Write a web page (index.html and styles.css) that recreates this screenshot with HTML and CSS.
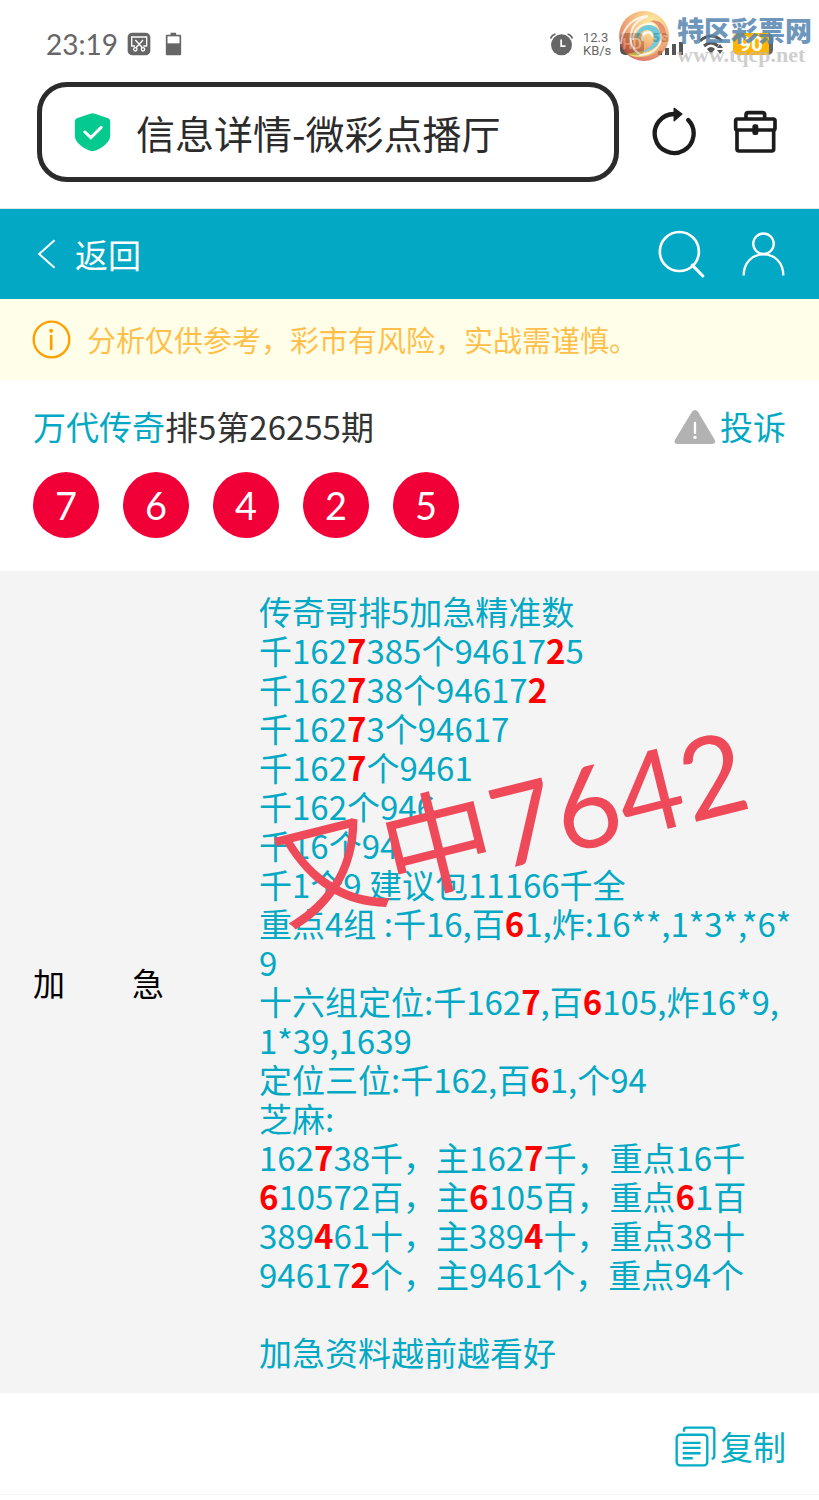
FILE: index.html
```html
<!DOCTYPE html>
<html lang="zh-CN">
<head>
<meta charset="utf-8">
<meta name="viewport" content="width=device-width, initial-scale=1">
<title>信息详情-微彩点播厅</title>
<link rel="stylesheet" href="styles.css">
</head>
<body>
<div class="status">
  <span class="clock">23:19</span>
  <svg class="i-shot" viewBox="380 38 72 72" aria-hidden="true"><rect x="382" y="40" width="68" height="68" rx="14" fill="#666"/><path d="M404 80h-10V53h45v27h-10" fill="none" stroke="#fff" stroke-width="4"/><path d="M405 62l22 24M428 62l-22 24" stroke="#fff" stroke-width="4"/><circle cx="405" cy="90" r="5" fill="none" stroke="#fff" stroke-width="4"/><circle cx="428" cy="90" r="5" fill="none" stroke="#fff" stroke-width="4"/></svg>
  <svg class="i-cell" viewBox="495 38 50 72" aria-hidden="true"><path d="M511 40h17v6h12q3 0 3 3v56q0 3-3 3h-40q-3 0-3-3V49q0-3 3-3h11z" fill="#666"/><path d="M502 51h36v21h-36z" fill="#fff"/></svg>
  <div class="status-right">
    <svg class="i-alarm" viewBox="33 102 68 68" aria-hidden="true"><circle cx="67" cy="137" r="31" fill="#666"/><path d="M35 118q3-10 14-13M99 118q-3-10-14-13" stroke="#666" stroke-width="5" fill="none"/><path d="M66 121v20h13" stroke="#fff" stroke-width="5" fill="none"/></svg>
    <span class="speed">12.3<br>KB/s</span>
    <span class="hd">HD</span>
    <span class="signal"><small>5G</small><svg viewBox="0 0 32 22" aria-hidden="true"><path d="M6 18h4v4H6zM13 15h4v7h-4zM20 11h4v11h-4zM27 9h4v13h-4z" fill="#555"/></svg></span>
    <svg class="i-wifi" viewBox="0 0 26 22" aria-hidden="true"><path d="M2 8q11-10 22 0M6 13q7-6 14 0M10 17q3-3 6 0" fill="none" stroke="#555" stroke-width="3"/><path d="M10 17h6l-3 4zM19 15l3-4 3 4zM19 17h6l-3 4z" fill="#555"/></svg>
    <span class="battery">90</span>
  </div>
  <div class="watermark">
    <svg class="wm-logo" viewBox="0 0 52 52" aria-hidden="true">
      <defs>
        <radialGradient id="g1" cx=".65" cy=".25" r=".8"><stop offset="0" stop-color="#fff08a"/><stop offset=".4" stop-color="#f6b25a"/><stop offset="1" stop-color="#d04a38"/></radialGradient>
        <linearGradient id="g2" x1="0" y1="1" x2="1" y2="0"><stop offset="0" stop-color="#e3dc4f"/><stop offset=".5" stop-color="#e8a050"/><stop offset="1" stop-color="#d9583f"/></linearGradient>
      </defs>
      <circle cx="26" cy="26" r="25" fill="url(#g1)"/>
      <path d="M9 44C22 51 42 46 47 30C51 17 42 8 31 11C45 13 45 31 34 37C26 42 16 42 9 44z" fill="url(#g2)"/>
      <path d="M19 31C16 17 31 10 40 19C47 29 38 41 24 42C35 37 40 29 34 22C28 17 21 22 19 31z" fill="#3fb9cf"/>
      <path d="M25 31C23 22 33 19 35 27C34 21 25 20 24 28z" fill="#fff" stroke="#fff" stroke-width="2"/>
      <path d="M3 34C4 18 15 7 30 6C17 10 11 20 13 32C14 38 18 42 23 45" fill="none" stroke="#fff" stroke-width="2" opacity=".8"/>
      <path d="M15 30C15 17 27 11 37 15M21 45C36 45 45 34 43 24" fill="none" stroke="#fff" stroke-width="2" opacity=".8"/>
    </svg>
    <span class="wm-text"><b>特区彩票网</b><i>www.tqcp.net</i></span>
  </div>
</div>

<div class="browser">
  <label class="address">
    <svg class="i-shield" viewBox="220 276 110 120" aria-hidden="true"><path d="M268 281q7-3 14 0l40 14q6 3 6 9v44c0 20-27 38-46 44q-7 2-14 0c-19-6-46-24-46-44v-44q0-6 6-9z" fill="#04ca90"/><path d="M252 336l18 17 31-31" fill="none" stroke="#fff" stroke-width="9" stroke-linecap="round"/></svg>
    <input type="text" value="信息详情-微彩点播厅" aria-label="地址栏">
  </label>
  <button class="reload" aria-label="刷新"><svg viewBox="154 80 134 152"><path d="M224 101A58 58 0 1 0 265 119" fill="none" stroke="#1c1c1c" stroke-width="13" stroke-linecap="round"/><path d="M223 84l23 17-23 20z" fill="#1c1c1c" stroke="#1c1c1c" stroke-width="4" stroke-linejoin="round"/></svg></button>
  <button class="tools" aria-label="工具箱"><svg viewBox="400 88 135 135"><g fill="none" stroke="#1c1c1c" stroke-width="11"><path d="M439 115V103q0-7 7-7h42q7 0 7 7v12"/><rect x="408" y="115" width="118" height="33" rx="5"/><path d="M412 148v57q0 6 6 6h98q6 0 6-6v-57"/></g><rect x="458" y="131" width="18" height="32" rx="7" fill="#1c1c1c"/></svg></button>
</div>

<header class="bar">
  <a class="back" href="#"><svg viewBox="112 88 56 90" aria-hidden="true"><path d="M164 92l-46 41 46 41" fill="none" stroke="#fff" stroke-width="6"/></svg>返回</a>
  <button class="search" aria-label="搜索"><svg viewBox="172 450 141 145"><circle cx="236" cy="515" r="59" fill="none" stroke="#fff" stroke-width="8"/><path d="M275 556l32 33" stroke="#fff" stroke-width="9" stroke-linecap="round"/></svg></button>
  <button class="user" aria-label="我的"><svg viewBox="424 454 130 132"><g fill="none" stroke="#fff" stroke-width="7"><circle cx="489" cy="489" r="31"/><path d="M429 585c0-38 25-64 60-64s60 26 60 64"/></g></svg></button>
</header>

<p class="notice"><svg viewBox="96 334 116 116" aria-hidden="true"><circle cx="154" cy="392" r="53" fill="none" stroke="#ff9f00" stroke-width="7"/><circle cx="153" cy="366" r="6" fill="#ff9f00"/><path d="M153 382v38" stroke="#ff9f00" stroke-width="8" stroke-linecap="round"/></svg>分析仅供参考，彩市有风险，实战需谨慎。</p>

<main>
  <section class="issue">
    <div class="issue-head">
      <h1><a href="#">万代传奇</a>排5第26255期</h1>
      <a class="report" href="#"><svg viewBox="104 54 126 108" aria-hidden="true"><path d="M158 62q9-10 18 0l50 84q5 12-8 13H115q-13-1-8-13z" fill="#b2b2b2"/><path d="M167 96v30" stroke="#fff" stroke-width="7" stroke-linecap="round"/><circle cx="167" cy="139" r="5" fill="#fff"/></svg>投诉</a>
    </div>
    <ul class="balls"><li>7</li><li>6</li><li>4</li><li>2</li><li>5</li></ul>
  </section>

  <section class="plan">
    <h2 class="plan-name"><span>加</span><span>急</span></h2>
    <div class="plan-text">传奇哥排5加急精准数<br>
千162<b>7</b>385个94617<b>2</b>5<br>
千162<b>7</b>38个94617<b>2</b><br>
千162<b>7</b>3个94617<br>
千162<b>7</b>个9461<br>
千162个946<br>
千16个94<br>
千1个9 建议包11166千全<br>
重点4组 :千16,百<b>6</b>1,炸:16**,1*3*,*6*<br>
9<br>
十六组定位:千162<b>7</b>,百<b>6</b>105,炸16*9,<br>
1*39,1639<br>
定位三位:千162,百<b>6</b>1,个94<br>
芝麻:<br>
162<b>7</b>38千，主162<b>7</b>千，重点16千<br>
<b>6</b>10572百，主<b>6</b>105百，重点<b>6</b>1百<br>
389<b>4</b>61十，主389<b>4</b>十，重点38十<br>
94617<b>2</b>个，主9461个，重点94个<br>
<br>
加急资料越前越看好</div>
    <div class="stamp">又中7642</div>
  </section>
</main>

<footer class="actions">
  <button class="copy"><svg viewBox="106 82 122 122" aria-hidden="true"><g fill="none" stroke="#03adc4" stroke-width="7"><rect x="111" y="108" width="91" height="91" rx="10"/><path d="M133 99V93q0-6 6-6h77q7 0 7 7v77q0 7-8 9" /><path d="M129 132h53M129 147h53M129 163h53M129 178h30"/></g></svg>复制</button>
</footer>
</body>
</html>
```

FILE: styles.css
```css
* { box-sizing: border-box; }
body {
  margin: 0;
  background: #fff;
  color: #333;
  font-family: "Noto Sans CJK SC", "Noto Sans", sans-serif;
  font-size: 33px;
  line-height: 39px;
}
button { border: 0; padding: 0; background: none; font: inherit; color: inherit; display: flex; align-items: center; }
a { color: #03a9c4; text-decoration: none; }
svg { display: block; flex: none; }

/* phone status bar */
.status {
  position: relative;
  display: flex;
  align-items: center;
  padding: 24px 46px 18px;
  line-height: 40px;
  color: #666;
}
.clock { font-family: Lato, sans-serif; font-size: 28px; }
.i-shot { width: 24px; height: 24px; margin-left: 9px; }
.i-cell { width: 17px; height: 24px; margin-left: 14px; }
.status-right { margin-left: auto; display: flex; align-items: center; }
.i-alarm { width: 23px; height: 23px; }
.speed { margin-left: 10px; width: 30px; font-family: Roboto, sans-serif; font-size: 13px; line-height: 13px; }
.hd { margin-left: 7px; width: 24px; border-radius: 5px; background: #555; color: #fff; font: bold 14px/22px Roboto, sans-serif; text-align: center; }
.signal { position: relative; margin-left: 8px; }
.signal svg { width: 32px; height: 22px; }
.signal small { position: absolute; left: 0; top: -2px; font: bold 13px/14px Roboto, sans-serif; }
.i-wifi { width: 26px; height: 22px; margin-left: 14px; }
.battery {
  margin-left: 9px;
  width: 40px;
  border-radius: 5px;
  border-right: 4px solid #666;
  background: #ffb400;
  color: #fff;
  font: bold 21px/22px Roboto, sans-serif;
  text-align: center;
}

.watermark { position: absolute; top: 10px; right: 9px; display: flex; gap: 7px; }
.wm-logo { width: 52px; height: 52px; opacity: .75; }
.wm-text { display: flex; flex-direction: column; width: 133px; }
.wm-text b { font-size: 27px; font-weight: 900; line-height: 40px; color: #5585b0; opacity: .85; white-space: nowrap; }
.wm-text i { margin-top: -7px; font: bold 22px/24px "Liberation Serif", serif; color: #bbb; opacity: .7; }

/* browser bar */
.browser {
  display: flex;
  align-items: center;
  padding: 0 41px 26px 37px;
  border-bottom: 1px solid #e6e6e6;
}
.address {
  flex: 1;
  min-width: 0;
  display: flex;
  align-items: center;
  gap: 25px;
  height: 100px;
  padding: 0 32px;
  border: 5px solid #2b2b2b;
  border-radius: 30px;
}
.i-shield { width: 37px; height: 40px; }
.address input { flex: 1; min-width: 0; border: 0; padding: 0; background: none; outline: 0; font: inherit; font-size: 39px; line-height: 56px; color: #2b2b2b; }
.reload { margin-left: 32px; }
.reload svg { width: 45px; height: 51px; }
.tools { margin-left: 37px; }
.tools svg { width: 45px; height: 45px; }

/* page header */
.bar { display: flex; align-items: center; height: 90px; padding: 0 34px 0 37px; background: #03a9c4; }
.back { display: flex; align-items: center; gap: 19px; margin-right: auto; color: #fff; }
.back svg { width: 19px; height: 30px; }
.search svg { width: 47px; height: 48px; }
.user { margin-left: 37px; }
.user svg { width: 43px; height: 44px; }

.notice {
  display: flex;
  align-items: center;
  gap: 16px;
  margin: 0;
  padding: 21px 32px;
  background: #ffffe9;
  color: #ffbf4d;
  font-size: 29px;
}
.notice svg { width: 39px; height: 39px; }

/* issue summary */
.issue { padding: 27px 33px 33px; }
.issue-head { display: flex; align-items: center; justify-content: space-between; }
.issue-head h1 { margin: 0; font-size: 33px; font-weight: 400; }
.report { display: flex; align-items: center; gap: 4px; }
.report svg { width: 42px; height: 36px; }
.balls { display: flex; gap: 24px; margin: 26px 0 0; padding: 0; list-style: none; }
.balls li {
  width: 66px;
  border-radius: 50%;
  background: #f00036;
  color: #fff;
  font: 38px/66px Lato, sans-serif;
  text-align: center;
}

/* plan */
.plan {
  position: relative;
  display: flex;
  align-items: center;
  padding: 21px 33px;
  background: #f4f4f4;
}
.plan-name { display: flex; justify-content: space-between; flex: none; width: 131px; margin: 0 95px 0 0; color: #000; font-size: 32px; font-weight: 400; }
.plan-text { color: #03a9c4; white-space: nowrap; }
.plan-text b { color: #f00; }
.stamp {
  position: absolute;
  left: 267px;
  top: 173px;
  color: #ef4a5a;
  font: 400 112px/160px Lato, "Noto Sans CJK SC", sans-serif;
  white-space: nowrap;
  transform: rotate(-14deg);
}

.actions { display: flex; justify-content: flex-end; padding: 33px 33px 27px; border-bottom: 1px solid #f6f6f6; color: #03adc4; }
.copy { gap: 4px; }
.copy svg { width: 41px; height: 41px; }
```
